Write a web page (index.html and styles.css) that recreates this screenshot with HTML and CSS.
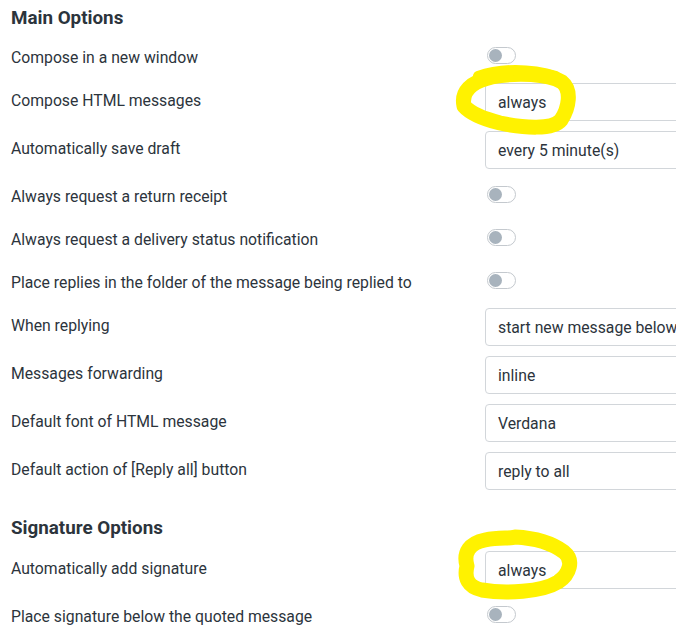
FILE: index.html
```html
<!DOCTYPE html>
<html lang="en">
<head>
  <meta charset="UTF-8">
  <title>Preferences - Composing Messages</title>
  <link rel="stylesheet" href="styles.css">
</head>
<body>
  <div class="page">
    <h3 class="section-title">Main Options</h3>
    <div class="options">
      <div class="row toggle-row">
        <label>Compose in a new window</label>
        <span class="switch"></span>
      </div>
      <div class="row">
        <label>Compose HTML messages</label>
        <div class="select">always</div>
      </div>
      <div class="row">
        <label>Automatically save draft</label>
        <div class="select">every 5 minute(s)</div>
      </div>
      <div class="row toggle-row">
        <label>Always request a return receipt</label>
        <span class="switch"></span>
      </div>
      <div class="row toggle-row">
        <label>Always request a delivery status notification</label>
        <span class="switch"></span>
      </div>
      <div class="row toggle-row">
        <label>Place replies in the folder of the message being replied to</label>
        <span class="switch"></span>
      </div>
      <div class="row">
        <label>When replying</label>
        <div class="select">start new message below</div>
      </div>
      <div class="row">
        <label>Messages forwarding</label>
        <div class="select">inline</div>
      </div>
      <div class="row">
        <label>Default font of HTML message</label>
        <div class="select">Verdana</div>
      </div>
      <div class="row">
        <label>Default action of [Reply all] button</label>
        <div class="select">reply to all</div>
      </div>
    </div>

    <h3 class="section-title">Signature Options</h3>
    <div class="options">
      <div class="row">
        <label>Automatically add signature</label>
        <div class="select">always</div>
      </div>
      <div class="row toggle-row">
        <label>Place signature below the quoted message</label>
        <span class="switch"></span>
      </div>
    </div>

    <!-- highlighter marks drawn over the screenshot -->
    <svg class="marks" width="676" height="641" viewBox="0 0 676 641">
      <path d="M464 106 C 461 92, 470 82, 492 77 C 518 72, 548 74, 562 82 C 572 90, 569 108, 561 120 C 553 130, 524 128, 500 123 C 484 119, 470 113, 464 106" />
      <path class="thin" d="M478 76 C 500 68, 530 68, 556 76" />
      <path d="M467 566 C 463 552, 470 543, 485 540 C 500 537, 510 539, 515 537 C 535 538, 552 543, 564 552 C 574 560, 570 574, 558 582 C 542 592, 505 594, 482 590 C 468 587, 464 578, 467 566" />
    </svg>
  </div>
</body>
</html>
```

FILE: styles.css
```css
:root {
  --text: #2c343c;
  --border: #d2d6da;
  --knob: #a8b3bd;
  --marker: #fff200;
}

html, body {
  margin: 0;
  overflow: hidden;
}

body {
  font-family: Roboto, "Liberation Sans", sans-serif;
  color: var(--text);
  background: #fff;
}

.page {
  position: relative;
  width: 676px;
  height: 641px;
  padding: 0 0 0 11px;
  box-sizing: border-box;
}

.section-title {
  margin: 0;
  padding: 7px 0 5px;
  font-size: 18.8px;
  line-height: 23px;
  font-weight: 700;
}

.options + .section-title {
  padding-top: 22px;
  padding-bottom: 6px;
}

.row {
  display: grid;
  grid-template-columns: 474px 260px;
  align-items: start;
  padding: 5px 0;
  font-size: 15.75px;
}

.row label {
  margin-top: 8px;
  line-height: 20px;
}

.toggle-row {
  min-height: 33px;
}

.select {
  height: 38px;
  box-sizing: border-box;
  border: 1px solid var(--border);
  border-radius: 4px;
  padding: 0 12px;
  line-height: 37px;
  white-space: nowrap;
  overflow: hidden;
}

.switch {
  position: relative;
  display: block;
  width: 29px;
  height: 17px;
  margin: 7px 0 0 2px;
  box-sizing: border-box;
  border: 1px solid #c4c9ce;
  border-radius: 9px;
}

.switch::before {
  content: "";
  position: absolute;
  top: 1px;
  left: 1px;
  width: 13px;
  height: 13px;
  border-radius: 50%;
  background: var(--knob);
}

.marks {
  position: absolute;
  top: 0;
  left: 0;
  pointer-events: none;
}

.marks path {
  fill: none;
  stroke: var(--marker);
  stroke-width: 15;
  stroke-linecap: round;
  stroke-linejoin: round;
}

.marks .thin {
  stroke-width: 10;
}
```
